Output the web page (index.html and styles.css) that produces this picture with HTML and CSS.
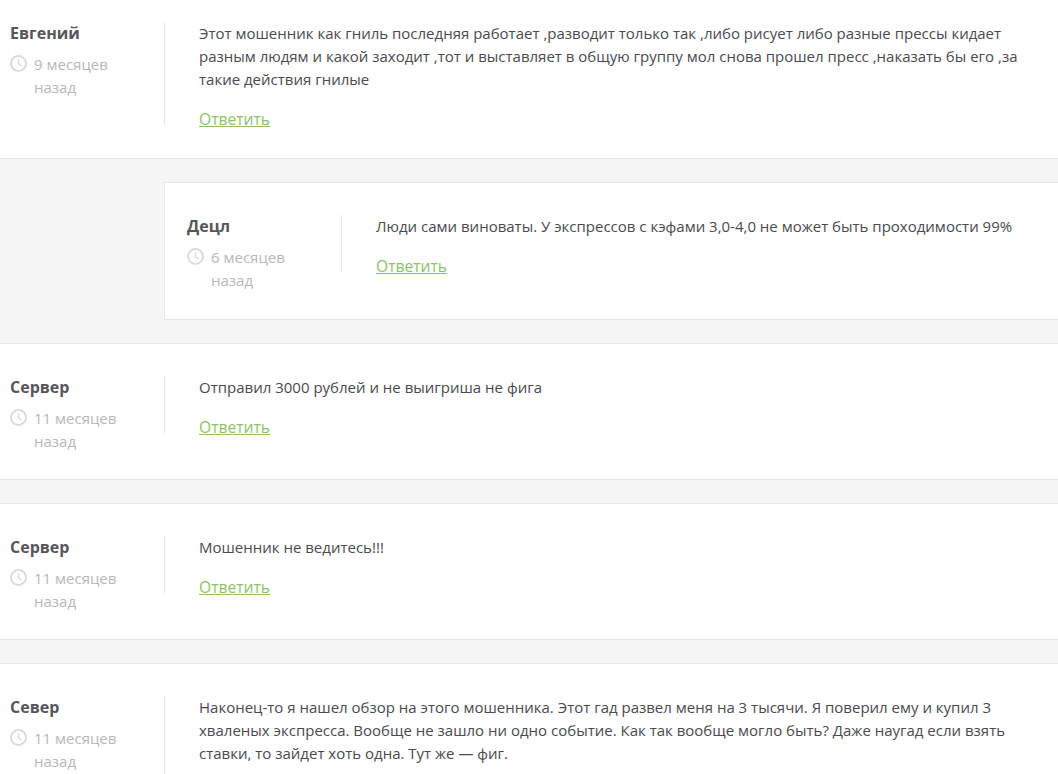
FILE: index.html
```html
<!DOCTYPE html>
<html lang="ru">

<head>
    <meta charset="UTF-8">
    <meta name="viewport" content="width=device-width, initial-scale=1.0">
    <title>Отзывы</title>
    <link rel="stylesheet" href="styles.css">
</head>

<body>
    <svg class="icon-defs" width="0" height="0">
        <symbol id="clock" viewBox="0 0 17 17">
            <circle cx="8.5" cy="8.5" r="7.5" fill="none" stroke="currentColor" stroke-width="2"></circle>
            <path d="M8.5 4.2v4.6l3 2.2" fill="none" stroke="currentColor" stroke-width="1.4"></path>
        </symbol>
    </svg>

    <main class="comments">
        <article class="comment comment-first">
            <div class="comment-meta">
                <h4 class="comment-author">Евгений</h4>
                <div class="comment-date">
                    <svg class="clock-icon"><use href="#clock"></use></svg>
                    <span>9 месяцев назад</span>
                </div>
            </div>
            <div class="comment-body">
                <p>Этот мошенник как гниль последняя работает ,разводит только так ,либо рисует либо разные прессы кидает разным людям и какой заходит ,тот и выставляет в общую группу мол снова прошел пресс ,наказать бы его ,за такие действия гнилые</p>
                <a class="reply-link" href="#">Ответить</a>
            </div>
        </article>

        <div class="replies">
            <article class="comment comment-reply">
                <div class="comment-meta">
                    <h4 class="comment-author">Децл</h4>
                    <div class="comment-date">
                        <svg class="clock-icon"><use href="#clock"></use></svg>
                        <span>6 месяцев назад</span>
                    </div>
                </div>
                <div class="comment-body">
                    <p>Люди сами виноваты. У экспрессов с кэфами 3,0-4,0 не может быть проходимости 99%</p>
                    <a class="reply-link" href="#">Ответить</a>
                </div>
            </article>
        </div>

        <article class="comment">
            <div class="comment-meta">
                <h4 class="comment-author">Сервер</h4>
                <div class="comment-date">
                    <svg class="clock-icon"><use href="#clock"></use></svg>
                    <span>11 месяцев назад</span>
                </div>
            </div>
            <div class="comment-body">
                <p>Отправил 3000 рублей и не выигриша не фига</p>
                <a class="reply-link" href="#">Ответить</a>
            </div>
        </article>

        <div class="spacer"></div>

        <article class="comment">
            <div class="comment-meta">
                <h4 class="comment-author">Сервер</h4>
                <div class="comment-date">
                    <svg class="clock-icon"><use href="#clock"></use></svg>
                    <span>11 месяцев назад</span>
                </div>
            </div>
            <div class="comment-body">
                <p>Мошенник не ведитесь!!!</p>
                <a class="reply-link" href="#">Ответить</a>
            </div>
        </article>

        <div class="spacer"></div>

        <article class="comment comment-last">
            <div class="comment-meta">
                <h4 class="comment-author">Север</h4>
                <div class="comment-date">
                    <svg class="clock-icon"><use href="#clock"></use></svg>
                    <span>11 месяцев назад</span>
                </div>
            </div>
            <div class="comment-body">
                <p>Наконец-то я нашел обзор на этого мошенника. Этот гад развел меня на 3 тысячи. Я поверил ему и купил 3 хваленых экспресса. Вообще не зашло ни одно событие. Как так вообще могло быть? Даже наугад если взять ставки, то зайдет хоть одна. Тут же — фиг.</p>
            </div>
        </article>
    </main>
</body>

</html>
```

FILE: styles.css
```css
* {
    margin: 0;
    padding: 0;
    box-sizing: border-box;
}

html,
body {
    height: 774px;
    overflow: hidden;
}

body {
    background-color: #fff;
    font-family: 'Open Sans', 'Noto Sans', sans-serif;
    font-size: 15px;
    line-height: 23px;
    color: #4a4a4f;
}

.icon-defs {
    position: absolute;
}

.comment {
    display: flex;
    align-items: flex-start;
    padding: 32px 40px 26px 10px;
    background-color: #fff;
    border-top: 1px solid #e8e8e8;
    border-bottom: 1px solid #e8e8e8;
}

.comment-first {
    padding-top: 22px;
    padding-bottom: 33px;
    border-top: none;
}

.comment-last .comment-body {
    padding-bottom: 10px;
}

.comment-meta {
    flex: 0 0 154px;
    padding-right: 40px;
}

.comment-author {
    font-size: 16px;
    font-weight: 700;
    line-height: 22px;
    color: #55565a;
}

.comment-date {
    display: flex;
    align-items: flex-start;
    gap: 7px;
    margin-top: 9px;
    color: #b8b8b8;
}

.clock-icon {
    flex: 0 0 17px;
    width: 17px;
    height: 17px;
    margin-top: 2px;
    color: #dcdcdc;
}

.comment-body {
    flex: 1;
    padding-left: 34px;
    border-left: 1px solid #e8e8e8;
}

.reply-link {
    display: block;
    width: fit-content;
    margin-top: 22px;
    font-size: 15.6px;
    line-height: 12px;
    color: #8cc269;
    text-decoration: underline;
}

.replies {
    padding: 23px 0 23px 164px;
    background-color: #f5f5f5;
}

.comment-reply {
    padding: 32px 40px 27px 22px;
    border: 1px solid #e8e8e8;
    border-right: none;
}

.spacer {
    height: 23px;
    background-color: #f5f5f5;
}
```
